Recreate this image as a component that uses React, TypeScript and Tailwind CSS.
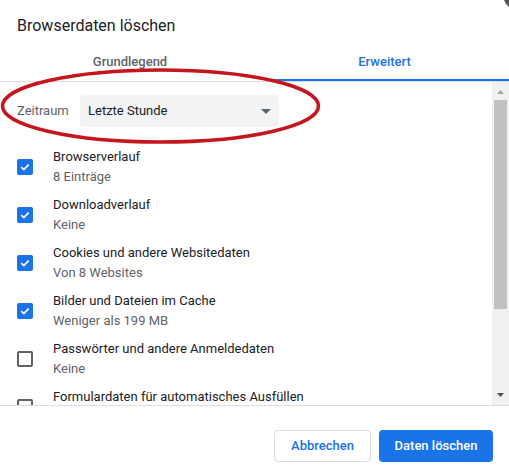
import React from "react";

interface DataItem {
  title: string;
  detail: string;
  checked: boolean;
}

const items: DataItem[] = [
  { title: "Browserverlauf", detail: "8 Einträge", checked: true },
  { title: "Downloadverlauf", detail: "Keine", checked: true },
  { title: "Cookies und andere Websitedaten", detail: "Von 8 Websites", checked: true },
  { title: "Bilder und Dateien im Cache", detail: "Weniger als 199 MB", checked: true },
  { title: "Passwörter und andere Anmeldedaten", detail: "Keine", checked: false },
  { title: "Formulardaten für automatisches Ausfüllen", detail: "Keine", checked: false },
];

function Checkbox({ checked }: { checked: boolean }) {
  if (checked) {
    return (
      <div className="flex h-4 w-4 shrink-0 items-center justify-center rounded-[2px] bg-[#1a73e8]">
        <svg width="12" height="12" viewBox="0 0 12 12" fill="none">
          <path d="M2.3 6.2 L4.8 8.6 L9.8 3.6" stroke="white" strokeWidth="1.8" />
        </svg>
      </div>
    );
  }
  return <div className="h-4 w-4 shrink-0 rounded-[2px] border-2 border-[#5f6368]" />;
}

export default function App() {
  return (
    <div
      className="relative h-[469px] w-[509px] overflow-hidden bg-white text-[#202124]"
      style={{ fontFamily: "Roboto, 'Noto Sans', sans-serif" }}
    >
      {/* Header */}
      <div className="px-[17px] pt-[16px] text-[16px] leading-[20px]">Browserdaten löschen</div>

      {/* Tabs */}
      <div className="flex h-[46px] border-b border-[#dadce0]">
        <div className="flex w-[260px] justify-center pt-[16px] text-[13px] font-medium leading-[20px] text-[#5f6368]">
          Grundlegend
        </div>
        <div className="relative flex flex-1 justify-center pt-[16px] text-[13px] font-medium leading-[20px] text-[#1a73e8]">
          Erweitert
          <div className="absolute bottom-0 left-[13px] right-0 h-[2px] bg-[#1a73e8]" />
        </div>
      </div>

      {/* Scroll area */}
      <div className="flex h-[324px] border-b border-[#dadce0]">
        <div className="flex-1 overflow-hidden">
          <div className="flex items-center pl-[17px] pt-[13px]">
            <span className="w-[63px] text-[13px] leading-[20px] text-[#5f6368]">Zeitraum</span>
            <div className="flex h-[32px] w-[199px] items-center justify-between rounded-[4px] bg-[#f1f3f4] pl-[8px] pr-[8px]">
              <span className="text-[13px] leading-[20px]">Letzte Stunde</span>
              <svg width="10" height="5" viewBox="0 0 10 5">
                <path d="M0 0 H10 L5 5 Z" fill="#5f6368" />
              </svg>
            </div>
          </div>

          <div className="mt-[20px] flex flex-col gap-[8px]">
            {items.map((item) => (
              <div key={item.title} className="flex h-[40px] items-center pl-[17px]">
                <Checkbox checked={item.checked} />
                <div className="ml-[20px] text-[13px] leading-[20px]">
                  <div>{item.title}</div>
                  <div className="text-[#5f6368]">{item.detail}</div>
                </div>
              </div>
            ))}
          </div>
        </div>

        {/* Scrollbar */}
        <div className="flex w-[17px] flex-col items-center bg-[#f1f1f1]">
          <svg className="mt-[8px]" width="7" height="4" viewBox="0 0 7 4">
            <path d="M0 4 L3.5 0 L7 4 Z" fill="#a3a3a3" />
          </svg>
          <div className="mt-[6px] h-[209px] w-[13px] bg-[#c1c1c1]" />
          <div className="flex-1" />
          <svg className="mb-[8px]" width="7" height="4" viewBox="0 0 7 4">
            <path d="M0 0 H7 L3.5 4 Z" fill="#505050" />
          </svg>
        </div>
      </div>

      {/* Footer */}
      <div className="flex justify-end gap-[8px] pr-[16px] pt-[24px]">
        <button className="h-[32px] w-[97px] rounded-[4px] border border-[#dadce0] bg-white text-[13px] font-medium text-[#1a73e8]">
          Abbrechen
        </button>
        <button className="h-[32px] w-[114px] rounded-[4px] bg-[#1a73e8] text-[13px] font-medium text-white">
          Daten löschen
        </button>
      </div>

      {/* Annotation overlay */}
      <svg className="pointer-events-none absolute left-0 top-0" width="509" height="469" viewBox="0 0 509 469">
        <ellipse cx="160.5" cy="106" rx="158" ry="36" fill="none" stroke="#c4161c" strokeWidth="3.5" />
        <path d="M504 0 H509 V7 L506 4 Z" fill="#555" />
      </svg>
    </div>
  );
}
